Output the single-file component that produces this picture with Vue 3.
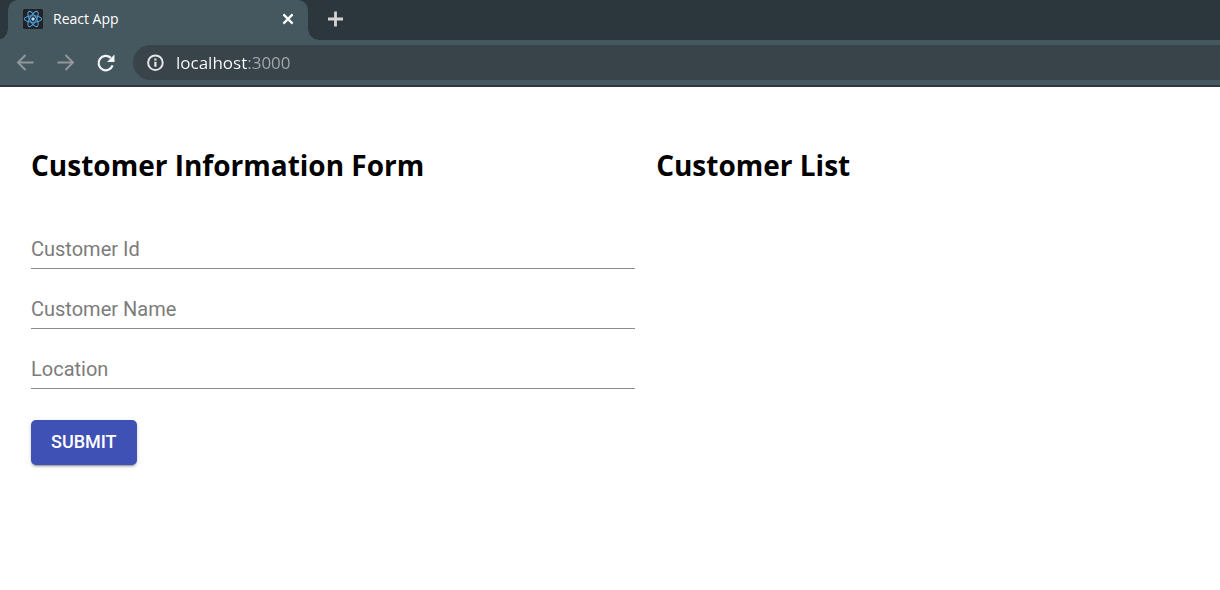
<script setup>
import { reactive } from 'vue'

const fields = [
  { id: 'customerId', label: 'Customer Id' },
  { id: 'customerName', label: 'Customer Name' },
  { id: 'location', label: 'Location' },
]
const customer = reactive({ customerId: '', customerName: '', location: '' })
</script>

<template>
  <div class="browser">
    <header class="chrome">
      <div class="tab-strip">
        <div class="tab">
          <svg class="favicon" viewBox="0 0 20 20" aria-hidden="true">
            <rect width="20" height="20" rx="1.5" fill="#222126" />
            <g fill="none" stroke="#4c9fd8" stroke-width="1.1">
              <ellipse cx="10" cy="10" rx="8.6" ry="3.3" />
              <ellipse cx="10" cy="10" rx="8.6" ry="3.3" transform="rotate(60 10 10)" />
              <ellipse cx="10" cy="10" rx="8.6" ry="3.3" transform="rotate(120 10 10)" />
            </g>
            <circle cx="10" cy="10" r="1.7" fill="#b9e3f8" />
          </svg>
          <span class="tab-title">React App</span>
          <button class="icon-button close" type="button" aria-label="Close tab">
            <svg width="20" height="20" viewBox="0 0 20 20"><path d="M5.4 5.4l9.2 9.2M14.6 5.4l-9.2 9.2" stroke="#fff" stroke-width="2.2" /></svg>
          </button>
        </div>
        <button class="icon-button new-tab" type="button" aria-label="New tab">
          <svg width="20" height="20" viewBox="0 0 20 20"><path d="M10.5 2.5v15M3 10h15" stroke="#d5d3d1" stroke-width="2.8" /></svg>
        </button>
      </div>
      <div class="toolbar">
        <button class="icon-button" type="button" aria-label="Back">
          <svg width="20" height="20" viewBox="0 0 20 20" fill="none" stroke="#929799" stroke-width="2"><path d="M17.5 9.5H2.5M9.5 2L2 9.5 9.5 17" /></svg>
        </button>
        <button class="icon-button" type="button" aria-label="Forward">
          <svg width="20" height="20" viewBox="0 0 20 20" fill="none" stroke="#929799" stroke-width="2"><path d="M1.5 9.5h15M9.5 2L17 9.5 9.5 17" /></svg>
        </button>
        <button class="icon-button" type="button" aria-label="Reload">
          <svg width="20" height="20" viewBox="0 0 20 20"><path d="M16.6 12.4A7.2 7.2 0 1 1 14.8 4.9" fill="none" stroke="#f3f4f4" stroke-width="2.2" /><path d="M18.5 1.5v7.5H11z" fill="#f3f4f4" /></svg>
        </button>
        <div class="address-bar">
          <svg width="18" height="18" viewBox="0 0 18 18" aria-hidden="true"><circle cx="9.4" cy="8.7" r="7.3" fill="none" stroke="#e3e5e6" stroke-width="2" /><path d="M9.4 7.8v5M9.4 4.5v2" stroke="#e3e5e6" stroke-width="2.2" /></svg>
          <input class="address" type="text" aria-label="Address" value="localhost:3000" />
        </div>
      </div>
    </header>

    <main class="page">
      <section>
        <h1>Customer Information Form</h1>
        <form @submit.prevent>
          <div v-for="field in fields" :key="field.id" class="field">
            <input :id="field.id" v-model="customer[field.id]" type="text" placeholder=" " />
            <label :for="field.id">{{ field.label }}</label>
          </div>
          <button class="submit" type="submit">SUBMIT</button>
        </form>
      </section>
      <section>
        <h1>Customer List</h1>
      </section>
    </main>
  </div>
</template>

<style>
body {
  background: #fff;
}
</style>

<style scoped>
.browser {
  font-family: "Open Sans", "Noto Sans", sans-serif;
}

.chrome {
  background: #455860;
  border-bottom: 2px solid #2d383e;
}

.tab-strip {
  display: flex;
  align-items: center;
  height: 40px;
  padding-left: 8px;
  background: #2c373d;
}

.tab {
  position: relative;
  display: flex;
  align-items: center;
  box-sizing: border-box;
  width: 300px;
  height: 40px;
  padding: 0 10px 2px 15px;
  border-radius: 10px 10px 0 0;
  background: #455860;
}

/* Flared feet where the tab meets the toolbar */
.tab::before,
.tab::after {
  content: "";
  position: absolute;
  bottom: 0;
  width: 10px;
  height: 10px;
}

.tab::before {
  right: 100%;
  background: radial-gradient(circle at 0 0, transparent 9px, #455860 10px);
}

.tab::after {
  left: 100%;
  background: radial-gradient(circle at 100% 0, transparent 9px, #455860 10px);
}

.favicon {
  width: 20px;
  height: 20px;
}

.tab-title {
  flex: 1;
  margin-left: 10px;
  color: #fff;
  font-size: 14px;
  line-height: 18px;
}

.icon-button {
  display: flex;
  padding: 0;
  border: 0;
  background: none;
}

.new-tab {
  margin: 0 0 2px 17px;
}

.toolbar {
  display: flex;
  align-items: center;
  gap: 20px;
  height: 45px;
  padding-left: 16px;
}

.address-bar {
  display: flex;
  flex: 1;
  align-items: center;
  gap: 12px;
  height: 35px;
  margin-left: -3px;
  padding-left: 13px;
  border-radius: 18px 0 0 18px;
  background: #38444a;
}

.address {
  flex: 1;
  min-width: 0;
  padding: 0;
  border: 0;
  outline: 0;
  /* Host in white, port dimmed */
  background: linear-gradient(90deg, #fff 72px, #a3a9ac 72px);
  background-clip: text;
  -webkit-text-fill-color: transparent;
  font: 17px/24px "Open Sans", "Noto Sans", sans-serif;
}

.page {
  display: grid;
  grid-template-columns: 15fr 14fr;
  gap: 21px;
  padding: 58px 0 30px 31px;
}

h1 {
  margin: 0 0 44px;
  font-size: 28px;
  font-weight: 700;
  line-height: 40px;
  color: #000;
}

.field {
  position: relative;
  margin-bottom: 20px;
  font-family: Roboto, sans-serif;
  font-size: 20px;
}

.field input {
  display: block;
  box-sizing: border-box;
  width: 100%;
  height: 40px;
  padding: 0;
  border: 0;
  border-bottom: 1px solid #8c8c8c;
  border-radius: 0;
  outline: 0;
  background: transparent;
  font: inherit;
}

.field label {
  position: absolute;
  top: 8px;
  left: 0;
  color: #7c7c7c;
  line-height: 24px;
  pointer-events: none;
}

.field input:focus + label,
.field input:not(:placeholder-shown) + label {
  top: -12px;
  font-size: 15px;
}

.submit {
  margin-top: 11px;
  padding: 0 20px 1px;
  border: 0;
  border-radius: 5px;
  background: #3f51b5;
  box-shadow: 0 3px 1px -2px rgba(0, 0, 0, 0.2), 0 2px 2px rgba(0, 0, 0, 0.14), 0 1px 5px rgba(0, 0, 0, 0.12);
  color: #fff;
  font: 500 18px/44px Roboto, sans-serif;
}
</style>
